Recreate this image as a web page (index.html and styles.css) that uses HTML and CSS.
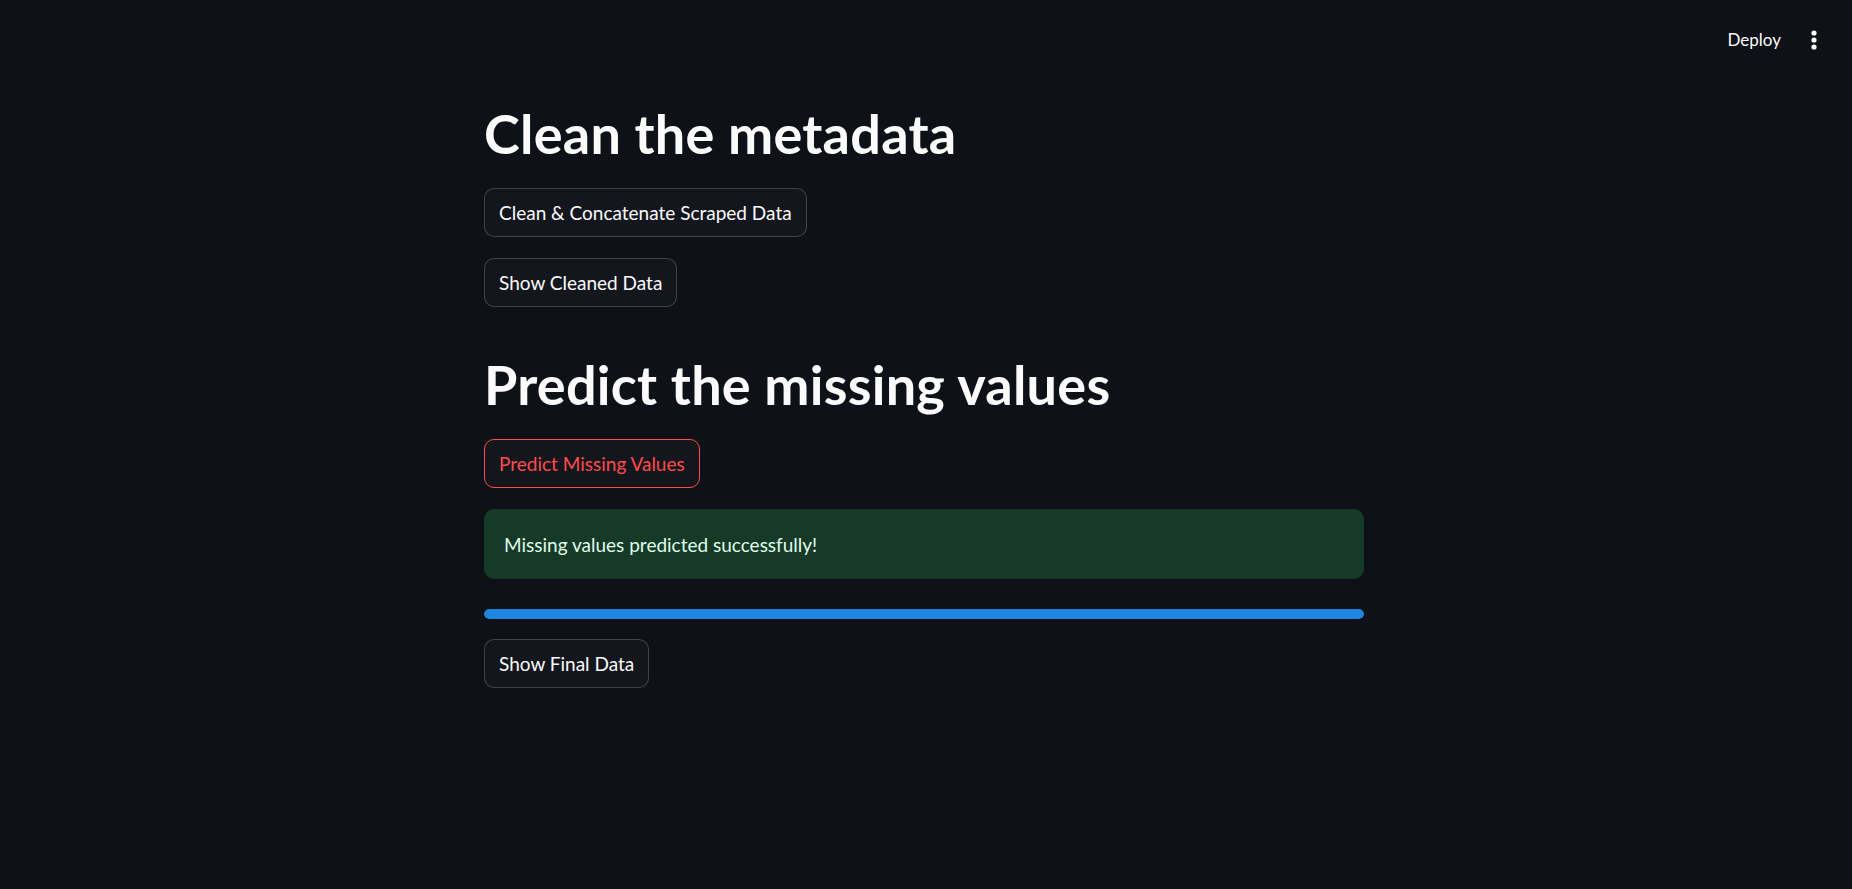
FILE: index.html
```html
<!DOCTYPE html>
<html lang="en">
<head>
<meta charset="utf-8">
<title>Streamlit</title>
<link rel="stylesheet" href="styles.css">
</head>
<body>
<div class="app">
  <header class="topbar">
    <span class="deploy">Deploy</span>
    <span class="menu" aria-label="menu">
      <svg width="10" height="24" viewBox="0 0 10 24"><circle cx="5" cy="5" r="2.6" fill="#fafafa"/><circle cx="5" cy="12" r="2.6" fill="#fafafa"/><circle cx="5" cy="19" r="2.6" fill="#fafafa"/></svg>
    </span>
  </header>
  <main class="main">
    <div class="block">
      <h1 class="title">Clean the metadata</h1>
      <button class="btn">Clean &amp; Concatenate Scraped Data</button>
      <button class="btn gap">Show Cleaned Data</button>
      <h1 class="title second">Predict the missing values</h1>
      <button class="btn active">Predict Missing Values</button>
      <div class="alert gap">Missing values predicted successfully!</div>
      <div class="progress"><div class="bar" style="width:100%"></div></div>
      <button class="btn after-progress">Show Final Data</button>
    </div>
  </main>
</div>
</body>
</html>
```
FILE: styles.css
```css
html, body {
  margin: 0;
  padding: 0;
  background: #0e1117;
  color: #fafafa;
  font-family: Lato, "Noto Sans", sans-serif;
}
.app {
  min-height: 889px;
  display: flex;
  flex-direction: column;
}
.topbar {
  height: 75px;
  display: flex;
  align-items: center;
  justify-content: flex-end;
  gap: 28px;
  padding-right: 33px;
  box-sizing: border-box;
}
.deploy {
  font-size: 17px;
  color: #fafafa;
  padding-top: 3px;
}
.menu {
  display: flex;
  align-items: center;
  padding-top: 5px;
}
.main {
  display: flex;
  justify-content: center;
  padding-right: 4px;
}
.block {
  width: 880px;
  display: flex;
  flex-direction: column;
  align-items: flex-start;
  padding-top: 27px;
}
.title {
  margin: 0 0 22px 0;
  font-size: 54px;
  line-height: 64px;
  font-weight: 700;
  color: #fafafa;
  letter-spacing: 0.25px;
}
.title.second {
  margin-top: 46px;
}
.btn {
  height: 49px;
  box-sizing: border-box;
  padding: 0 14px;
  border: 1px solid rgba(250, 250, 250, 0.2);
  border-radius: 10px;
  background: #13161d;
  color: #fafafa;
  font-family: Lato, "Noto Sans", sans-serif;
  font-size: 19px;
  line-height: 1;
  cursor: pointer;
}
.gap {
  margin-top: 21px;
}
.btn.active {
  border-color: #ff4b4b;
  color: #ff4b4b;
}
.alert {
  width: 100%;
  height: 70px;
  box-sizing: border-box;
  padding: 0 20px;
  display: flex;
  align-items: center;
  background: #173928;
  color: #dffde9;
  border-radius: 10px;
  font-size: 19px;
}
.progress {
  width: 100%;
  height: 10px;
  margin-top: 30px;
  border-radius: 5px;
  background: #262730;
  overflow: hidden;
}
.bar {
  height: 100%;
  background: #1f86e0;
  border-radius: 5px;
}
.after-progress {
  margin-top: 20px;
}
```
